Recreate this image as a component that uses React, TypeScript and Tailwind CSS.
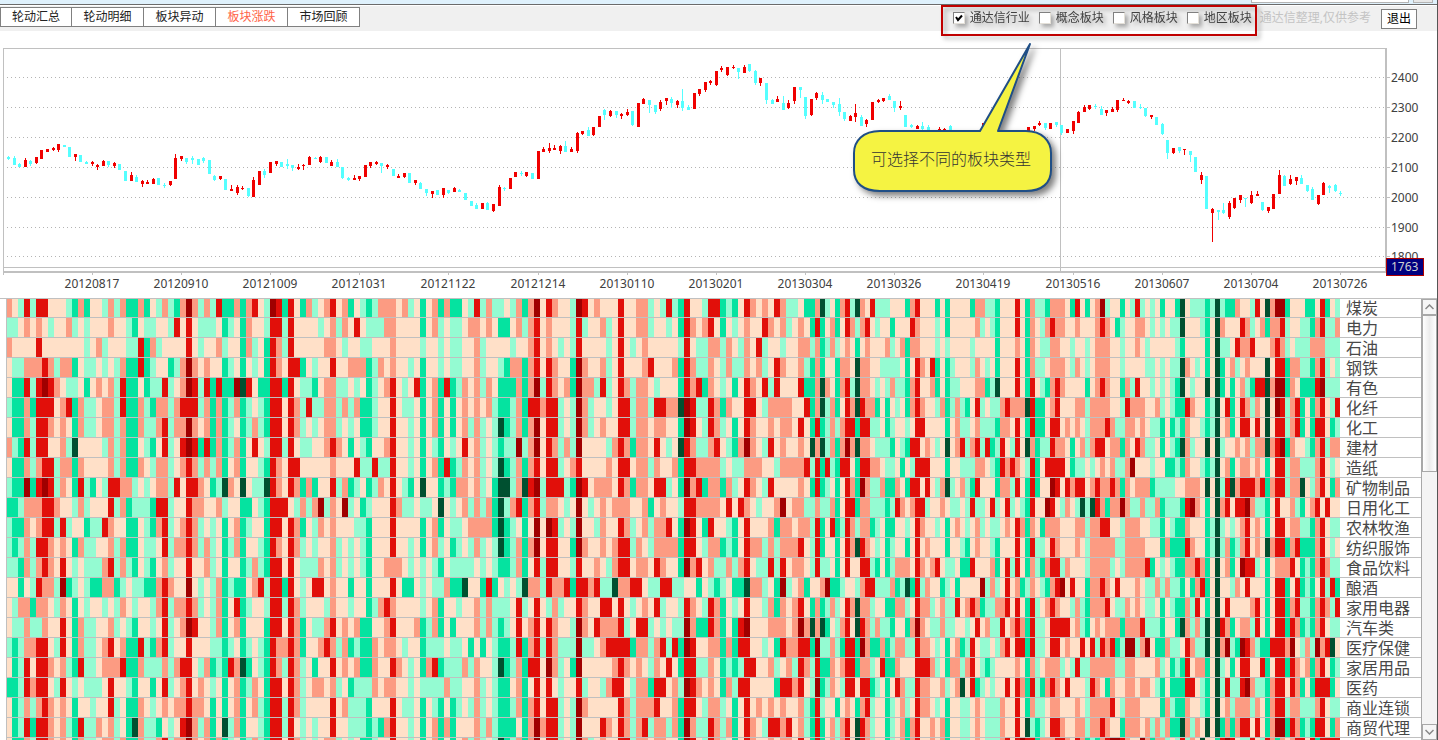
import {useState} from "react";

const tabs = ["轮动汇总", "轮动明细", "板块异动", "板块涨跌", "市场回顾"];
const boardTypes = ["通达信行业", "概念板块", "风格板块", "地区板块"];

const dates = [
    "20120817", "20120910", "20121009", "20121031", "20121122", "20121214", "20130110", "20130201",
    "20130304", "20130326", "20130419", "20130516", "20130607", "20130704", "20130726",
];

const priceLevels = [
    {label: "2400", y: 77},
    {label: "2300", y: 107},
    {label: "2200", y: 137},
    {label: "2100", y: 167},
    {label: "2000", y: 197},
    {label: "1900", y: 227},
    {label: "1800", y: 256},
];

// one entry per day: direction, then high / body top / body bottom / low. "_" is an empty day
const candleData = `
c156,157,159,160 c156,158,165,165 c163,164,167,167 r158,160,167,167 c160,161,164,166 r157,157,163,164 r150,150,159,159 r149,149,152,152
r147,148,150,151 r144,144,150,152 c145,145,147,147 c147,147,157,157 r154,154,157,161 c155,155,162,162 c161,162,164,164 r161,162,164,166
r164,165,167,170 r160,161,166,166 c161,161,165,167 r162,163,166,168 c164,164,170,170 c171,171,181,181 r172,175,181,181 c175,177,182,182
r180,181,184,187 r180,182,184,184 r178,179,184,184 c178,178,185,185 c183,185,186,188 r181,181,185,186 r154,158,179,179 r156,156,159,161
c158,158,162,164 c156,158,160,164 c159,159,165,165 c157,158,161,163 c160,160,174,174 c175,176,180,181 r176,176,179,180 c179,179,190,190
r185,189,191,191 r185,187,193,195 r186,188,189,190 c188,188,196,197 r177,180,197,197 r171,171,185,185 c169,171,175,178 r162,162,173,173
r161,161,164,166 c162,162,167,167 c159,164,166,169 c165,165,168,171 r164,167,169,170 r164,165,166,170 r156,157,165,165 c157,158,159,159
r156,157,162,163 c157,157,163,163 r160,162,166,166 c159,162,167,167 c167,167,178,179 c177,178,180,181 r175,178,180,180 r176,176,179,181
r165,165,177,177 r162,162,166,168 r161,162,164,165 c163,163,166,173 r164,165,167,169 c169,169,176,176 r174,176,178,178 r173,173,177,178
c173,173,183,183 r180,180,183,185 c182,183,189,189 c189,189,193,196 r191,191,194,198 c190,190,195,195 r188,188,195,198 c190,190,193,194
r187,188,192,192 c189,190,192,192 c193,193,200,200 c201,201,206,206 c203,205,209,209 r203,203,209,209 c202,203,210,210 r204,204,211,212
r185,187,206,206 c187,188,189,191 r178,178,189,189 r172,172,177,177 c171,173,174,176 r172,172,176,177 c173,173,179,179 r151,151,179,179
r147,149,152,152 r143,148,151,153 r145,148,150,150 r145,146,151,154 c141,146,152,152 r147,149,152,152 r132,133,151,153 r131,131,134,135
c127,130,136,136 r127,127,135,136 r116,116,127,127 c109,110,115,120 r110,111,116,117 c111,111,115,118 r113,114,116,119 r109,112,115,116
c111,111,125,126 r103,103,127,127 r98,99,104,104 c100,100,105,113 c105,105,112,114 r100,102,109,111 r98,98,101,105 c97,99,103,108
r100,101,105,108 c89,101,108,111 c105,107,110,110 r93,93,109,109 r89,89,94,96 r82,82,90,92 r80,81,83,85 r71,71,85,86
r66,68,70,72 r67,67,75,76 r65,67,68,69 c68,68,72,79 r65,67,73,73 c64,64,71,72 c70,71,83,85 r78,78,83,86
c83,83,100,104 c99,100,104,104 r96,99,102,102 c96,103,110,110 r100,103,108,109 r87,87,101,104 c87,87,90,98 c97,97,116,119
r99,99,115,116 r92,93,98,100 c92,95,100,104 c99,99,102,102 c102,102,105,108 c98,104,112,116 c112,112,119,121 r115,116,121,121
r104,113,117,122 c115,117,126,126 r119,120,124,127 r102,102,120,120 r99,100,102,103 r98,98,101,102 c94,96,100,100 c101,101,108,112
r101,106,108,110 c115,115,127,127 c124,125,127,128 r125,126,129,129 c122,126,129,131 c125,127,132,132 _ r127,129,132,132
r128,129,131,132 c125,126,132,132 _ _ _ _ _ r123,123,135,135
_ _ _ _ _ _ _ r127,127,133,133
r126,126,129,131 r121,123,125,126 c123,123,128,130 r123,123,129,129 c122,122,125,127 c125,125,133,135 r129,129,133,133 r121,121,131,134
r111,112,123,123 r105,107,112,112 r105,105,109,110 c104,106,107,109 c106,109,115,115 r110,110,113,116 r107,109,112,112 r100,100,110,112
r98,100,101,101 r100,101,103,104 c101,101,108,108 c104,107,108,109 c108,108,116,117 r115,115,117,119 c117,117,125,125 c123,124,134,135
c140,140,153,159 r148,148,153,154 c147,147,151,153 r149,149,150,155 c151,151,155,162 c157,157,172,172 r172,175,180,184 c176,176,209,209
r208,209,213,242 c210,210,212,220 c203,210,213,214 r201,203,217,219 r198,198,208,209 r195,195,200,203 c198,198,199,207 r191,195,203,204
r191,194,196,196 c202,202,210,211 r207,207,211,213 r194,194,209,209 r170,175,194,194 c175,176,186,186 r175,179,184,185 r177,177,181,185
c175,178,184,184 c185,185,191,192 c187,189,200,200 r195,195,204,205 r182,183,195,195 c185,186,188,193 c184,185,191,192 c191,193,194,196
`.trim().split(/\s+/);

const heatColors: Record<string, string> = {
    d: "#a00000",
    r: "#e10f0a",
    s: "#fc9b82",
    p: "#ffe0c8",
    m: "#94fbd2",
    g: "#05e3a0",
    k: "#005030",
};

// run-length rows: a colour key, then how many days it lasts
const sectors = [
    {name: "煤炭", heat: "spmrmr2p3mgsgp2msmsg2sgpmsmgsdsmsmrg2sgsrpmdrgrpgsmpsrpsgpmgms3psmpgpsgsg2pmr msm2pmsgsdprsp2mdrpsp3rp2s2mpmrmgrp2mr2gmgprspsprsm2pg gskmpgsrmksprm3p3gsrp3gpgp2 p2gs2m2gp3rpgsm2gs3pgrpgpsdmp2gpmrmpmpgp2gkpm3gmkmg2sp2mrpksd2gp3g2prgpm"},
    {name: "电力", heat: "m2pspspmp2smpmp3sp2mgpm2p2mrprpm3pgmpgsp2mr2mrp4mpsmsprpm3s2p4gpsmpm2ps2 pspg2psmsrpsp3mrmp2smprp2s2mp2mpgrspsrpgpmpsp2rspsmpsp grgpsgprsmsrpmp2gp3rsp3mpgp2 p3smpmgp3rpgspmsrs2p2sp3srspgmp2s2pmpmpm2kp3mgpksp3rsmpsgs2rmp2m2gsrm2s"},
    {name: "石油", heat: "sp4rp7mpsmp3m2rgsmp4rpmp2smp2gsmpgrsmrp5s2pmp2m2p3sp4mp2mpm2p2s mp4mp2srpspmpmrp4mprpmpsp5mrpm2s2mspmsprmp2mp2s2 msgmsmpspgpsp3smpsgs2p3mpmp2 p2mp4gp3spgspm2s2p2mp2mps3p2mp2spmp5mgp4gpkm2prs2rp3srsmpm3s3m3"},
    {name: "钢铁", heat: "pm2s3rsms2gpm2pmpmsg2rgmp2gmsdspsp2gmpgpmpgrspr2gpmp2rp2s3gmspsp2mpgp2mpm2p2s mp2mgs2gsrprsp2gdsp2smprp3srp3sgrsm2spmsm2spsmprsp2sm gsgp2gs2pks2p2m4pgprsprgpgmp p2mspmpgp3rpgsm2ps3pmspmps3p2mp4m2pmpm2kspmpgpkgpsmpsp3kpr2gs2m2gsrmpm"},
    {name: "有色", heat: "pg2rmrdrspm2pgpspsmrg2pgm2rmpsdrmrgrg2dkrpg2r2grpm2gps2m2pmpgmpsrpmprgpsgrgmsps mspg3sgsdmrspsgds2mrmprsms2pmp3grsrgspmpgprsprmrp3rg gskspgsrmks2pmpmsm2gsrp2sgpgm2 p3s2gmkp3rpgrpmgsrsp4gpsrsp2gsmrp2mpmpmgkpmp2kpkgpgpsmgr2ksd2gspg3rdm3"},
    {name: "化纤", heat: "mg2sgr3psrgsm2ps2mrg2smgs2msr3msgsgmsgmpmgr2prsmrm2s2msmsg2mp2rpm2pgpsgpgpsps psmg2msgr2sr2mpmdsmp2mpr2ms2mr2s2kdrm2rsgsp2r2pms4p2r gskmsgprskrs2gpgpmpgsrsp2msgms mgprmpm2srs3krg2p srp3s2ms4p2mrs3p2smpmg2rsp2gmkprgprsmspkpdrmsrgpgsrpmr"},
    {name: "化工", heat: "pg2smr2spspgsm2ps2msg2sm2srms2dspsgsgmpgmsmgr2prsmpmps2mpmpg2mp2rp2mpgpsgpgpsms mpmkgmsgsdpr2mpmdsmpsp2r2ms2ps2p2gdrpmrsmpgprsp2sps2prp grgmsmsr2gr2m2pgmp2mpr2p4gps m2psm3gs2prpgrg2p r2pspspms3rsm2s2pspm2gpgmgsp2mgmkpsgpr2prpkpr2msrgpgr2pgm"},
    {name: "建材", heat: "smgrmr2p2smkp4msmsg2pmgprmprdrgrgsgmsgprpmr2mrpm2p2srspgpmgp2srp2mpgpmgpmprps mpmgm2dmsdprsmsmdp4msrsgs2prpmpkrsm2srpmgsdspmrpsp2sp kskmsgsdsks2pm3gpmgr2pspmpkps rmsrmrgmrpmrpksgm2 rs2pgpsmsr2ps2gsprsm2pgpmgksmp2kpkmp2spsms2ksrdgsp2mgsrms2"},
    {name: "造纸", heat: "pg2smsr2ms2gsp4smsg2spms2mpsrsmsmsgpsgp2mgrspr2p5sp3rm2rm2rp2mpgpsgrgmsps mpmkgmsgsrpr2mpsrp4spr2ps2msp2sgr2s4mpm2s3p2ms4r mrgrmgr2pgr2s2pm2pgpmr3p3gp2 m3s2pmgrsrspmrgpr r3pgm2pmpspsm2sdp3mp2g2mgsp2mgmkpsgps2pspgpr2ms2m3srpmp"},
    {name: "矿物制品", heat: "mg2dgrdrmspgrmgpmr2s2mpmps2mrpr2spgmkspkpm2krsprsgsgp2rmsgmpgmsprpmgpkp2gmgs2ps mpgk2mskrdmr3mgdrps3prsgs2pr2mpgdsrgs2gsmprspmrp4sp grgmpgprsgdsm2sg2spgr2prpmskmp smgrp3gs2mrpgrgp2 drprsr2psrs2rsgsps3gm4p2s3pkpkmrksr3srgsr2ms2kpmsrpgs"},
    {name: "日用化工", heat: "g2ms3r2sp2msmp3rmsgm3gr2mp2rs2p2smp2g2pmgr3pmsmsdmspdmpgmp3rsm2pm2pkpmpsms msgkmsrgsrms2pmpdpmpsps3p2sgpsp2mr2s4prprspmp2sdps2m msm2sgpr2gs2m3gmrspsr2mp2spm2 pmrm2prmprmpmgrp2d rpmspmkmkrsgs2dsm2sm2sgm3grdspgpksrpr2dsm2gprp2smgpsrprp2"},
    {name: "农林牧渔", heat: "mg2spsr2mrmp2gm2rsp2g2pmgsrmpsrsmpmpgpsgmp2gr2prsgpmspsp3m2gp3rp4gpsgpm2ps2 s2gkgmpgpdpdrmpmdp2msp2rsmpsms2rpgdrpgrp2mgprp3sgs2ps2 mrgprgmrsms2gmpg2p2mprsp2mpgps pmpsmpm2psprsgspgs s2p3s2ms2r2p2ms3p2m2gpmg2sp3gmkmpmpsrpspgpr2ps2m2gsrpm2"},
    {name: "纺织服饰", heat: "mgmsmr2spspgsm2p2smsg2pm2prms2rsmsmpgmsgp2mgrsprsmpmp2smpmpmgp3rp2mpgpsmpgmpms mpmkgmsgsdpr2p2gdsp2spsr2mspms4gr2pms2gmgprs2msms3rp mrgp2gprskrspmpgmp2gprpsp3gp2 mgpsp2mgp3rpgrm2p rsp3spms5m2s4p3gsg3rsp2gmkmsgmsrpspksr2gsrg3srpmp"},
    {name: "食品饮料", heat: "m2gsmsrsprpmpm3srmsmgpmgpsmp2rp2smpgp2gmsmgr2prpm3spsmpmpmgp2s3pmpmpmgpm4p mpmg2msgprmr2p2mrp2spmsr2ps2prsp2gdsrpsm2smsrpm2rmrps2p mrm2pgprp2r2mgpgms3prspsrpm2p g2rp3sgprmrpgsmgs r2msp3ms4mpms4rgpmpmg2s2rsgpkpsgpdr2mpgps3rpgmgsrsm2"},
    {name: "酿酒", heat: "p2gpmrs2mdgmpmg2s2gmpm2g2srsp2dpmpmsgmg2psrmr2grpmpr2psp2gp2gp3rpg2pmpm2sg2kp2 grgpmpmks2mrs2rgr2srm2ks2r2pm2r2m2p2gpmgmpg2ks2mpgdmpsg p2sdg2mp2msr2m3sgmkgrmsp2gmpg p4dmsmprpsgmspmg srdprp2gs2rsprp3spm2smsm2gpgsrgpkp2msprp3gpr2gprgmgprmrg"},
    {name: "家用电器", heat: "pms2gs2pmspgpmp2mpmspmp2msrms2rsmpmsgprgmp2mr2mrsmp3msp2mp2gmsrsp4mpsgp2mp2s msm3prmprpmsmp2rsp2r2prpmpsprmp2mrspmrsgpmprp2msgspsrp gsgmsmprsks2mp2g2s2mprs2mpsm2r psrsgm2s2rprpgrmps rsp2msmgs3rpm2spspm2pgpmg2smrpgpkprp4srpgpr2gsrm2gsrsmr"},
    {name: "汽车类", heat: "pm2sm2sp2rpgsm2p2smpmgp2mprmpsdrp2msgpsgp3gr2prsgpm2srpspsg2p2srp3sgmsgpgp3s msmgmprpsrprsp2mdsprs3rmpr2mpmpm2dsg2rsgpgrdp3s3psds kskgpmsrpkrsmsm2gp2gsdspm2sm2p pmprpsm2rpsrsgrm2p r4psmgpsps3gs3rm3gp2gksmsmkpkrsgps2mrpgpr2grsgmgsrpm2"},
    {name: "医疗保健", heat: "mgms2r2pmrpgsm2psrpsg2rmgsrmp2rp3m2gmpgmpmgrs2rsgp2srsmsgmg2sps2pmp2gm3pm2pgp gpmg2mrgsrmrsm3dm2psr4gs2msrmrgdrp2s2gsgr2p2mpgrs2r2 gdm2smgr2gdsg2sgms2m2rs2pmpgps gmrpm2pmsrpr2grm2p r2psp2rprmrsrgmd2msdpg2sm2prsm2kpksdmgdrsmg2r3sdpmsmdsrkp"},
    {name: "家居用品", heat: "pgmrpr2spsmgrm2ps3rg2sm3smsr2pmsgmgrskgpmgrsmrsmpgp2rpspsg2sp2rspmpgsrgm3sms p2mkgmsgr2pdsmpgdp5srspspmsprpgr2m2spgmgmr2p2smpsmrs mrg2spsr2gs2mprg2sp3r3smpgs2 msrpmgmp4spgsmps s2mpmrm2s5m2s2p4smpgmgrps2gpkmpgpr2p2rgpr2grspsgsrpgm"},
    {name: "医药", heat: "g2mrsr2pmrpmpm3prp2mgp2gprmpsrpspmpgpsgmspgr2prsmps2psmpgm3sps2p2mpm4sm2p2s mpmg2psgprprpmp2rmp2msr2pms2gr2psmdrspspgsmr2p4gr2srp mdgmspmr2pr2gmpgprsm2rs2p2smps kprgmpmp2rprsgrmgs rsprp3mrspgsp2s2ps2pmgpg3r2pmgpkmrm2rdsm2gsr2prsgpgr3gp"},
    {name: "商业连锁", heat: "pgmsmsrspspgp2mp2rmpg2spmpsps2rs2pgpgpsgpsmgr2mrsmp4rpsm3gp3rpm2pgpmgpgmpms mpmg2msgsrpr2mpmdsp5rsms3rp2sgr2pms2mpgprpspspsp2sm grmp2gpspgsrmp2gmpsmprs2pmpgp2 m2pspm3sp2rpgsm2p s2p3spms4rpms3p4gsmg2sp2mgpkpsms3mspgsr2ms2m3srpm2"},
    {name: "商贸代理", heat: "pgmrgr2spsmgrm2spsmpgksm2gpmprdsmsgpkmsgp2mgr2mrpmpmp2rp2m3gmgsrp2mpgpsgsgp3s msmg3pgsdsr2mpmdp3rsprsmsrms2msgdsm2rsmsgprspmr2srpsm grgpsmsrpkrsmp2gmpsgsrp2spsgp2 m2pspm3sp2rpkmgmp r2sp2s2ms2rsp2gs3psmsmsg2ksmspkpkgsgsr2prpgsd2grsgmgr2pgs"},
    {name: "", heat: "pg2smr2spspgsm2ps2msg2sm2srms2dspsgsgmpgmsmgr2prsmpmps2mpmpg2mp2rp2mpgpsgpgpsms mpmkgmsgsdpr2mpmdsmpsp2r2ms2ps2p2gdrpmrsmpgprsp2sps2prp grgpsmsrpkrsmp2gmpsgsrp2spsgp2 m2pspm3srprdr2gs3 r2sprsgmgsrd2rsp2dsgs2mpmrmspkp2grdrpm2rpmrsgspsr2prgr5srgrpr2gpms"},
];

const decode = (text: string) =>
    [...text.matchAll(/([a-z])(\d*)/g)].flatMap((m) => Array(Number(m[2] || 1)).fill(m[1])) as string[];

const dayX = (i: number) => Math.round(8 + i * 5.574);

// the first 134 days are 6 wide, the later ones 5
const cellX = (i: number) => (i <= 134 ? i * 6 : 804 + (i - 134) * 5);

function Candles() {
    return (
        <g shapeRendering="crispEdges">
            {candleData.map((entry, i) => {
                if (entry === "_") return null;
                const [high, top, bottom, low] = entry.slice(1).split(",").map(Number);
                const fill = entry[0] === "r" ? "#f00000" : "#55ffff";
                return (
                    <g key={i} fill={fill}>
                        <rect x={dayX(i)} y={high} width="1" height={low - high} />
                        <rect x={dayX(i) - 1} y={top} width="3" height={bottom - top} />
                    </g>
                );
            })}
        </g>
    );
}

function Callout() {
    return (
        <g>
            <path
                d="M880 131H980L1030 44L998 131H1026C1042 131 1051 141 1051 153V170C1051 183 1042 191 1026 191H880C863 191 854 183 854 170V153C854 141 863 131 880 131Z"
                fill="#f5f342"
                stroke="#1f4e86"
                strokeWidth="2"
                strokeLinejoin="round"
                className="drop-shadow-[4px_4px_3px_rgba(0,0,0,0.5)]"
            />
            <text x="871" y="165" fill="#333" className="text-[16px] font-light">可选择不同的板块类型</text>
        </g>
    );
}

function IndexChart() {
    return (
        <svg viewBox="0 31 1437 267" className="block w-full shrink-0" role="img" aria-label="指数走势">
            <g stroke="#b4b4b4" strokeDasharray="1 3" shapeRendering="crispEdges">
                {priceLevels.map((p) => <path key={p.label} d={`M7 ${p.y + 0.5}H1385`} />)}
            </g>
            <g fill="#c0c0c0" shapeRendering="crispEdges">
                <rect x="3" y="48" width="1383" height="1" />
                <rect x="3" y="48" width="1" height="227" />
                <rect x="3" y="267" width="1383" height="1" />
                <rect x="3" y="271" width="1383" height="2" />
                <rect x="1385" y="48" width="2" height="225" />
                <rect x="1060" y="48" width="1" height="223" />
                {dates.map((d, i) => <rect key={d} x={dayX(15 + i * 16)} y="273" width="1" height="2" />)}
                {priceLevels.map((p) => <rect key={p.label} x="1387" y={p.y} width="3" height="1" />)}
            </g>
            <Candles />
            <g fill="#404040" className="text-[12px]">
                {dates.map((d, i) => <text key={d} x={dayX(15 + i * 16)} y="288" textAnchor="middle">{d}</text>)}
                {priceLevels.map((p) => <text key={p.label} x="1391" y={p.y + 5}>{p.label}</text>)}
            </g>
            <rect x="1386.5" y="258.5" width="37" height="17" fill="#000080" stroke="#b00000" />
            <text x="1391" y="271" fill="#d0d0d0" className="text-[12px]">1763</text>
            <Callout />
        </svg>
    );
}

function HeatStrip({heat}: {heat: string}) {
    const cells = decode(heat).slice(0, 240);
    return (
        <svg viewBox="0 0 1334 19" preserveAspectRatio="none" shapeRendering="crispEdges" className="block h-full w-full">
            {cells.map((c, i) => (
                <rect key={i} x={cellX(i)} y="0" width={cellX(i + 1) - cellX(i)} height="19" fill={heatColors[c]} />
            ))}
            <rect x="0" y="0" width="1" height="19" fill="#c0c0c0" />
        </svg>
    );
}

function ScrollBar() {
    return (
        <div className="flex w-4 shrink-0 flex-col border-l border-[#a8a8a8] bg-[#f4f4f4]">
            <button aria-label="向上" className="grid h-4 shrink-0 place-items-center border border-[#a8a8a8] bg-[#f6f6f6]">
                <svg width="9" height="6" fill="none" stroke="#888" strokeWidth="1.500"><path d="M0.500 5L4.500 1L8.500 5" /></svg>
            </button>
            <div className="h-[157px] shrink-0 border border-[#a8a8a8] bg-linear-to-r from-white via-[#ececec] to-white" />
            <div className="flex-1" />
            <button aria-label="向下" className="grid h-4 shrink-0 place-items-center border border-[#a8a8a8] bg-[#f6f6f6]">
                <svg width="9" height="6" fill="none" stroke="#888" strokeWidth="1.500"><path d="M0.500 1L4.500 5L8.500 1" /></svg>
            </button>
        </div>
    );
}

export default function App() {
    const [tab, setTab] = useState("板块涨跌");
    const [checked, setChecked] = useState(["通达信行业"]);

    const toggle = (name: string) => {
        setChecked((list) => (list.includes(name) ? list.filter((n) => n !== name) : [...list, name]));
    };

    return (
        <div className="flex h-screen flex-col overflow-hidden border-r border-[#555] bg-white font-['Noto_Sans','Noto_Sans_CJK_SC',sans-serif]">
            <div className="flex h-[5px] shrink-0 justify-end gap-1 border-b border-[#6b6b6b] bg-[#dff1fc] pr-1">
                <div className="h-[3px] w-[158px] border-x border-b border-[#b4b4b4] bg-white" />
                <div className="h-[3px] w-5 border-x border-b border-[#b4b4b4] bg-[#e8e8e8]" />
            </div>
            <header className="flex h-[26px] shrink-0 items-start justify-between border-t border-white bg-[#f0f0f0] text-[12px]">
                <nav className="mt-px flex">
                    {tabs.map((t) => (
                        <button
                            key={t}
                            onClick={() => setTab(t)}
                            className={`h-5 w-[72px] border-y border-r border-[#808080] bg-white leading-4 first:border-l ${t === tab ? "text-[#ff6347]" : "text-[#222]"}`}
                        >
                            {t}
                        </button>
                    ))}
                </nav>
                <div className="mr-5 flex items-start">
                    <fieldset className="z-10 -mt-px flex h-[31px] items-start gap-[9px] border-2 border-[#c00000] pt-[3px] pr-[3px] pl-[10px] text-[#404040] drop-shadow-[3px_3px_2px_rgba(0,0,0,0.3)]">
                        {boardTypes.map((name) => (
                            <label key={name} className="flex items-center gap-[5px] leading-4">
                                <span className="grid place-items-center">
                                    <input
                                        type="checkbox"
                                        checked={checked.includes(name)}
                                        onChange={() => toggle(name)}
                                        className="col-start-1 row-start-1 h-3 w-3 appearance-none border border-t-[#808080] border-r-[#e4e0d8] border-b-[#e4e0d8] border-l-[#808080] bg-white"
                                    />
                                    {checked.includes(name) && (
                                        <svg width="8" height="8" className="pointer-events-none col-start-1 row-start-1" fill="none" stroke="#000" strokeWidth="2">
                                            <path d="M1 3L3 6L7 1.500" />
                                        </svg>
                                    )}
                                </span>
                                {name}
                            </label>
                        ))}
                    </fieldset>
                    <span className="mt-1 ml-[3px] leading-4 text-[#c4c4c4]">通达信整理,仅供参考</span>
                    <button className="mt-[3px] ml-[10px] h-5 w-9 border border-[#808080] bg-white leading-4 text-black">退出</button>
                </div>
            </header>
            <IndexChart />
            <main className="flex min-h-0 flex-1 border-t border-[#c0c0c0] pl-[6px]">
                <div className="min-w-0 flex-1">
                    <table className="w-full table-fixed border-separate border-spacing-0">
                        <tbody>
                            {sectors.map((s, i) => (
                                <tr key={s.name}>
                                    <td className={`border-b border-[#c0c0c0] p-0 ${i === 0 ? "h-[19px]" : "h-5"}`}>
                                        <div className={i === 0 ? "h-[18px]" : "h-[19px]"}><HeatStrip heat={s.heat} /></div>
                                    </td>
                                    <th scope="row" className="w-[81px] border-b border-[#c0c0c0] p-0 pl-[6px] text-left text-[16px] leading-[18px] font-normal text-[#484848]">{s.name}</th>
                                </tr>
                            ))}
                        </tbody>
                    </table>
                </div>
                <ScrollBar />
            </main>
        </div>
    );
}
